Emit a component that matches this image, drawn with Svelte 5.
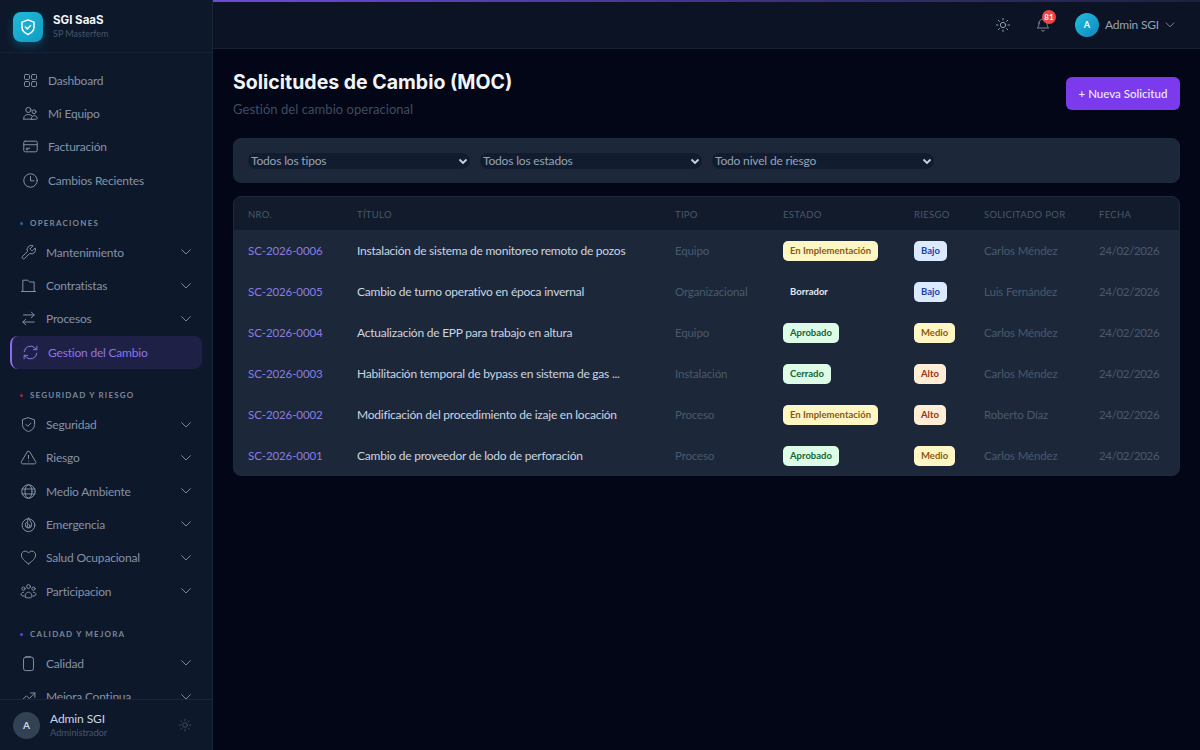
<script lang="ts">
  const icons: Record<string, string> = {
    grid: '<rect x="3.500" y="3.500" width="7" height="7" rx="1.500"/><rect x="13.500" y="3.500" width="7" height="7" rx="1.500"/><rect x="3.500" y="13.500" width="7" height="7" rx="1.500"/><rect x="13.500" y="13.500" width="7" height="7" rx="1.500"/>',
    team: '<circle cx="9" cy="7" r="3.600"/><path d="M2.500 20v-1.500c0-3 2.600-5 6.500-5 2 0 3.600.5 4.700 1.400"/><path d="M2.500 20h10.500"/><circle cx="17" cy="9.500" r="2.700"/><path d="M13 20c0-3 1.800-5 4.300-5s4.200 2 4.200 3.500c0 1-.6 1.500-1.500 1.500z"/>',
    card: '<rect x="2.500" y="4.500" width="19" height="15" rx="2"/><path d="M2.500 9.500h19"/><path d="M6 14.500h5M6 16.500h2"/>',
    clock: '<circle cx="12" cy="12" r="9.500"/><path d="M12 6.500V12.500h5"/>',
    wrench: '<path d="M14.700 6.300a1 1 0 0 0 0 1.400l1.600 1.600a1 1 0 0 0 1.400 0l3.770-3.770a6 6 0 0 1-7.940 7.940l-6.910 6.910a2.120 2.120 0 0 1-3-3l6.910-6.910a6 6 0 0 1 7.940-7.940l-3.760 3.760z"/>',
    folder: '<path d="M4 20V4.500h7l2.500 2.500H20V20"/><path d="M2 20.500h20"/>',
    swap: '<path d="m8 13-4 4 4 4"/><path d="M4 17h16"/><path d="m16 3 4 4-4 4"/><path d="M20 7H5"/>',
    refresh: '<path d="M3 11a9 9 0 0 1 15.500-5.200L21 8"/><path d="M21 3v5h-5"/><path d="M21 13a9 9 0 0 1-15.500 5.200L3 16"/><path d="M3 21v-5h5"/>',
    shield: '<path d="M12 2.500 20.500 5.500v6.500c0 5-3.600 8.300-8.500 10-4.900-1.700-8.500-5-8.500-10V5.500z"/><path d="m8.500 12 2.500 2.500 4.500-4.500"/>',
    alert: '<path d="M10.300 3.900 1.900 18a2 2 0 0 0 1.700 3h16.800a2 2 0 0 0 1.700-3L13.700 3.900a2 2 0 0 0-3.400 0z"/><path d="M12 9v4.500"/><path d="M12 17h.01"/>',
    globe: '<circle cx="12" cy="12" r="9.500"/><ellipse cx="12" cy="12" rx="5" ry="9.500"/><path d="M3 8.500h18M3 15.500h18"/>',
    flame: '<circle cx="12" cy="13" r="9"/><path d="M12 3c.5 3 4.500 5 4.500 9.500a4.500 4.500 0 0 1-9 0c0-1.500.5-2.500 1.500-3.500.3 1.500 1 2 1.800 2.200C10.500 8 11 5 12 3z"/><circle cx="12" cy="14" r="2"/>',
    heart: '<path d="M12 21C6 16.500 2 13 2 8.500A5.300 5.300 0 0 1 7.300 3c2 0 3.600 1 4.700 2.800C13.100 4 14.700 3 16.700 3A5.300 5.300 0 0 1 22 8.500C22 13 18 16.500 12 21z"/>',
    people: '<circle cx="12" cy="5" r="2.700"/><circle cx="5" cy="8" r="2.300"/><circle cx="19" cy="8" r="2.300"/><path d="M7.500 20c-.5-1-.5-2 0-3.500C8.300 14.500 10 13 12 13s3.700 1.500 4.500 3.500c.5 1.500.5 2.500 0 3.500-1 1.500-8 1.500-9 0z"/><path d="M5 13c-2 0-3.500 1.500-3.500 3 0 1.500 1.500 2.500 4 2.500M19 13c2 0 3.500 1.500 3.500 3 0 1.500-1.500 2.500-4 2.500"/>',
    clip: '<rect x="5" y="3" width="14" height="19" rx="3"/><path d="M9 2.500h6"/>',
    trend: '<path d="m2 18 7-7 4 4 8-8"/><path d="M15 7h6v6"/>',
    chevron: '<path d="m5.500 8.500 6.500 6.500 6.500-6.500"/>',
    sun: '<circle cx="12" cy="12" r="4"/><path d="M12 2v2.500M12 19.500V22M4.900 4.900l1.800 1.800M17.300 17.300l1.800 1.800M2 12h2.500M19.500 12H22M4.900 19.100l1.800-1.800M17.300 6.700l1.800-1.800"/>',
    bell: '<path d="M6 9a6 6 0 0 1 12 0c0 6 2.500 7.500 2.500 7.500h-17S6 15 6 9z"/><path d="M10 20a2.200 2.200 0 0 0 4 0"/>',
  };

  const topLinks = [
    { icon: "grid", label: "Dashboard" },
    { icon: "team", label: "Mi Equipo" },
    { icon: "card", label: "Facturación" },
    { icon: "clock", label: "Cambios Recientes" },
  ];

  const sections = [
    {
      title: "OPERACIONES",
      dot: "#0e7490",
      items: [
        { icon: "wrench", label: "Mantenimiento", sub: true },
        { icon: "folder", label: "Contratistas", sub: true },
        { icon: "swap", label: "Procesos", sub: true },
        { icon: "refresh", label: "Gestion del Cambio", active: true },
      ],
    },
    {
      title: "SEGURIDAD Y RIESGO",
      dot: "#b91c3c",
      items: [
        { icon: "shield", label: "Seguridad", sub: true },
        { icon: "alert", label: "Riesgo", sub: true },
        { icon: "globe", label: "Medio Ambiente", sub: true },
        { icon: "flame", label: "Emergencia", sub: true },
        { icon: "heart", label: "Salud Ocupacional", sub: true },
        { icon: "people", label: "Participacion", sub: true },
      ],
    },
    {
      title: "CALIDAD Y MEJORA",
      dot: "#4f46e5",
      items: [
        { icon: "clip", label: "Calidad", sub: true },
        { icon: "trend", label: "Mejora Continua", sub: true },
      ],
    },
  ];

  const rows = [
    ["SC-2026-0006", "Instalación de sistema de monitoreo remoto de pozos", "Equipo", "En Implementación", "Bajo", "Carlos Méndez"],
    ["SC-2026-0005", "Cambio de turno operativo en época invernal", "Organizacional", "Borrador", "Bajo", "Luis Fernández"],
    ["SC-2026-0004", "Actualización de EPP para trabajo en altura", "Equipo", "Aprobado", "Medio", "Carlos Méndez"],
    ["SC-2026-0003", "Habilitación temporal de bypass en sistema de gas ...", "Instalación", "Cerrado", "Alto", "Carlos Méndez"],
    ["SC-2026-0002", "Modificación del procedimiento de izaje en locación", "Proceso", "En Implementación", "Alto", "Roberto Díaz"],
    ["SC-2026-0001", "Cambio de proveedor de lodo de perforación", "Proceso", "Aprobado", "Medio", "Carlos Méndez"],
  ];

  const tone: Record<string, string> = {
    "En Implementación": "yellow",
    Borrador: "plain",
    Aprobado: "green",
    Cerrado: "green",
    Bajo: "blue",
    Medio: "yellow",
    Alto: "red",
  };
</script>

{#snippet icon(name: string, size = 17)}
  <svg viewBox="0 0 24 24" width={size} height={size} fill="none" stroke="currentColor" stroke-width="1.4" stroke-linecap="round" stroke-linejoin="round" aria-hidden="true">
    {@html icons[name]}
  </svg>
{/snippet}

<div class="shell">
  <aside class="sidebar">
    <div class="brand">
      <div class="logo">
        <svg viewBox="0 0 24 24" width="18" height="18" fill="none" stroke="#fff" stroke-width="2" stroke-linecap="round" stroke-linejoin="round">
          <path d="M12 2.500 20 5.500v6.500c0 5-3.400 8-8 10-4.600-2-8-5-8-10V5.500z"/>
          <path d="m8.500 12 2.500 2.500 4.500-4.500"/>
        </svg>
      </div>
      <div>
        <div class="brand-name">SGI SaaS</div>
        <div class="brand-sub">SP Masterfem</div>
      </div>
    </div>

    <nav class="nav">
      <div class="group top">
        {#each topLinks as link}
          <div class="link wide">
            <span class="ico">{@render icon(link.icon)}</span>
            <span>{link.label}</span>
          </div>
        {/each}
      </div>
      {#each sections as section}
        <div class="section-title">
          <span class="dot" style:background={section.dot}></span>{section.title}
        </div>
        <div class="group">
          {#each section.items as item}
            <div class="link" class:active={item.active}>
              <span class="ico">{@render icon(item.icon)}</span>
              <span class="grow">{item.label}</span>
              {#if item.sub}
                <span class="chev">{@render icon("chevron", 16)}</span>
              {/if}
            </div>
          {/each}
        </div>
      {/each}
    </nav>

    <div class="side-user">
      <div class="side-avatar">A</div>
      <div class="grow">
        <div class="side-name">Admin SGI</div>
        <div class="side-role">Administrador</div>
      </div>
      <span class="side-sun">{@render icon("sun", 14)}</span>
    </div>
  </aside>

  <div class="content">
    <header class="topbar">
      <span class="top-ico sun">{@render icon("sun", 16)}</span>
      <span class="top-ico bell">
        {@render icon("bell", 16)}
        <span class="count">81</span>
      </span>
      <div class="avatar">A</div>
      <span class="user">Admin SGI</span>
      <span class="user-chev">{@render icon("chevron", 14)}</span>
    </header>

    <main class="main">
      <div class="page-head">
        <div>
          <h1>Solicitudes de Cambio (MOC)</h1>
          <p>Gestión del cambio operacional</p>
        </div>
        <button class="primary" type="button">+ Nueva Solicitud</button>
      </div>

      <div class="filters">
        <select><option>Todos los tipos</option></select>
        <select><option>Todos los estados</option></select>
        <select><option>Todo nivel de riesgo</option></select>
      </div>

      <div class="table-card">
        <table>
          <colgroup>
            <col style="width:109px" /><col style="width:318px" /><col style="width:108px" /><col style="width:131px" /><col style="width:70px" /><col style="width:115px" /><col />
          </colgroup>
          <thead>
            <tr>
              <th>NRO.</th><th>TÍTULO</th><th>TIPO</th><th>ESTADO</th><th>RIESGO</th><th>SOLICITADO POR</th><th>FECHA</th>
            </tr>
          </thead>
          <tbody>
            {#each rows as r}
              <tr>
                <td class="code">{r[0]}</td>
                <td class="title">{r[1]}</td>
                <td class="dim">{r[2]}</td>
                <td><span class="badge {tone[r[3]]}">{r[3]}</span></td>
                <td><span class="badge {tone[r[4]]}">{r[4]}</span></td>
                <td class="dim">{r[5]}</td>
                <td class="dim date">24/02/2026</td>
              </tr>
            {/each}
          </tbody>
        </table>
      </div>
    </main>
  </div>
</div>

<style>
  :global(body) {
    margin: 0;
    background: #020617;
    font-family: Lato, "Liberation Sans", sans-serif;
  }
  .shell {
    display: flex;
    width: 1200px;
    height: 750px;
    overflow: hidden;
  }
  .grow { flex: 1; }

  /* Sidebar */
  .sidebar {
    width: 213px;
    flex: none;
    display: flex;
    flex-direction: column;
    background: #0d182b;
    border-right: 1px solid #1a2537;
    box-sizing: border-box;
  }
  .brand {
    display: flex;
    align-items: center;
    gap: 10px;
    height: 53px;
    flex: none;
    padding: 0 13px;
    box-sizing: border-box;
    border-bottom: 1px solid #162236;
  }
  .logo {
    width: 30px;
    height: 30px;
    border-radius: 8px;
    display: flex;
    align-items: center;
    justify-content: center;
    background: linear-gradient(135deg, #22b8d8, #0e9dc4);
    box-shadow: 0 4px 10px rgba(14, 165, 200, 0.3);
    margin-top: 2px;
  }
  .brand-name {
    font-family: Inter, sans-serif;
    font-size: 11.500px;
    font-weight: 700;
    color: #f1f5f9;
    line-height: 14px;
  }
  .brand-sub {
    font-size: 9px;
    color: #475569;
    line-height: 13px;
  }
  .nav {
    flex: 1;
    overflow: hidden;
    min-height: 0;
    padding-top: 10.500px;
  }
  .group {
    display: flex;
    flex-direction: column;
    padding: 0 10px;
  }
  .link {
    display: flex;
    align-items: center;
    gap: 9px;
    height: 33.300px;
    flex: none;
    box-sizing: border-box;
    padding: 0 8px 0 10px;
    font-size: 12px;
    letter-spacing: -0.200px;
    color: #8592a6;
    border-radius: 8px;
  }
  .link.wide { gap: 9.500px; padding-left: 11.500px; }
  .ico { display: flex; color: #8592a6; }
  .chev { display: flex; color: #8592a6; }
  .link.active {
    color: #8b74ea;
    background: #1e2145;
    border-left: 2px solid #8b6cf0;
    padding-left: 10px;
    gap: 9px;
  }
  .link.active .ico { color: #8b74ea; }
  .section-title {
    display: flex;
    align-items: center;
    gap: 7px;
    height: 14px;
    margin: 19.500px 0 5.500px;
    padding-left: 20px;
    font-size: 8px;
    font-weight: 700;
    letter-spacing: 1.200px;
    color: #7b8799;
  }
  .dot {
    width: 3px;
    height: 3px;
    border-radius: 50%;
  }
  .side-user {
    display: flex;
    align-items: center;
    gap: 10px;
    flex: none;
    height: 51px;
    box-sizing: border-box;
    padding: 0 20px 0 13px;
    border-top: 1px solid #1a2537;
  }
  .side-avatar {
    width: 27px;
    height: 27px;
    border-radius: 50%;
    background: #334155;
    color: #cbd5e1;
    font-size: 10px;
    font-weight: 700;
    display: flex;
    align-items: center;
    justify-content: center;
  }
  .side-name { font-size: 12px; color: #cbd5e1; line-height: 15px; letter-spacing: -0.100px; }
  .side-role { font-size: 9.500px; color: #475569; line-height: 14px; letter-spacing: -0.150px; }
  .side-sun { display: flex; color: #475569; }

  /* Top bar */
  .content {
    flex: 1;
    min-width: 0;
    display: flex;
    flex-direction: column;
  }
  .topbar {
    display: flex;
    align-items: center;
    height: 49px;
    flex: none;
    box-sizing: border-box;
    padding: 0 23px 2px 0;
    justify-content: flex-end;
    background: #0b1324;
    border-top: 2px solid transparent;
    border-image: linear-gradient(90deg, #6d4bd8, #3a2f7a 60%, #1e2140) 1 0 0 0;
    position: relative;
  }
  .topbar::after {
    content: "";
    position: absolute;
    left: 0;
    right: 0;
    bottom: 0;
    height: 1px;
    background: #182132;
  }
  .top-ico { display: flex; color: #8592a6; position: relative; }
  .top-ico.sun { margin-right: 24px; color: #94a3b8; }
  .top-ico.bell { margin-right: 24px; }
  .count {
    position: absolute;
    top: -7px;
    left: 7px;
    width: 14px;
    height: 14px;
    border-radius: 50%;
    background: #ef4444;
    color: #fff;
    font-size: 8px;
    font-weight: 700;
    display: flex;
    align-items: center;
    justify-content: center;
  }
  .avatar {
    width: 24px;
    height: 24px;
    border-radius: 50%;
    background: linear-gradient(135deg, #22c0dc, #0f86c0);
    color: #fff;
    font-size: 9px;
    font-weight: 700;
    display: flex;
    align-items: center;
    justify-content: center;
    margin-right: 6px;
  }
  .user { font-size: 12px; letter-spacing: -0.200px; color: #94a3b8; margin-right: 4px; }
  .user-chev { display: flex; color: #94a3b8; }

  /* Page */
  .main {
    flex: 1;
    padding: 21px 20px 0;
  }
  .page-head {
    display: flex;
    justify-content: space-between;
    align-items: flex-start;
    height: 68px;
  }
  h1 {
    margin: 0;
    font-family: Inter, sans-serif;
    font-size: 19.500px;
    font-weight: 700;
    line-height: 24px;
    color: #f1f5f9;
  }
  p {
    margin: 6px 0 0;
    font-size: 13px;
    line-height: 18px;
    letter-spacing: 0.050px;
    color: #3f4c60;
  }
  .primary {
    margin-top: 7px;
    height: 33px;
    width: 114px;
    border: none;
    border-radius: 6px;
    background: #7c3aed;
    color: #f1ecfe;
    font: 500 11.500px Lato, sans-serif;
    white-space: nowrap;
  }
  .filters {
    display: flex;
    align-items: center;
    gap: 10px;
    height: 45px;
    box-sizing: border-box;
    padding: 0 14px;
    border-radius: 8px;
    border: 1px solid #1e2a3c;
    background: #1c283a;
    margin-bottom: 13px;
  }
  select {
    appearance: none;
    width: 222px;
    height: 16px;
    border: none;
    border-radius: 8px;
    padding: 0 3px;
    font: 12px Lato, sans-serif;
    letter-spacing: -0.180px;
    color: #94a3b8;
    background-color: #111c2e;
    background-image: url("data:image/svg+xml,%3Csvg xmlns='http://www.w3.org/2000/svg' viewBox='0 0 12 12'%3E%3Cpath d='M2.500 4.500 6 8l3.500-3.500' fill='none' stroke='%23cbd5e1' stroke-width='1.800'/%3E%3C/svg%3E");
    background-repeat: no-repeat;
    background-position: right 1px center;
    background-size: 12px;
  }
  .table-card {
    border: 1px solid #1e2a3c;
    border-radius: 8px;
    overflow: hidden;
    background: #1c283a;
    height: 280px;
    box-sizing: border-box;
  }
  table {
    width: 100%;
    border-collapse: collapse;
    table-layout: fixed;
  }
  th {
    height: 33px;
    padding: 1px 14px 0;
    box-sizing: border-box;
    background: #111b2c;
    text-align: left;
    font-size: 9.500px;
    font-weight: 400;
    letter-spacing: 0.300px;
    color: #4b586b;
    white-space: nowrap;
  }
  td {
    height: 41px;
    padding: 0 14px;
    box-sizing: border-box;
    font-size: 12px;
    letter-spacing: -0.230px;
    white-space: nowrap;
  }
  .code { color: #8b7ce0; font-size: 11.500px; letter-spacing: -0.100px; }
  .title { color: #cbd5e1; }
  .dim { color: #4b586b; font-size: 11.500px; letter-spacing: -0.150px; }
  .date { letter-spacing: -0.350px; }
  .badge {
    display: inline-block;
    height: 20px;
    line-height: 20px;
    padding: 0 7px;
    border-radius: 5px;
    font-size: 9.500px;
    font-weight: 700;
    letter-spacing: 0;
    vertical-align: middle;
  }
  .yellow { background: #fef6c3; color: #8a5a12; }
  .green { background: #dcfce7; color: #166534; }
  .blue { background: #dbeafe; color: #1e40af; }
  .red { background: #ffedd5; color: #9a3412; }
  .plain { background: transparent; color: #e2e8f0; }
</style>
